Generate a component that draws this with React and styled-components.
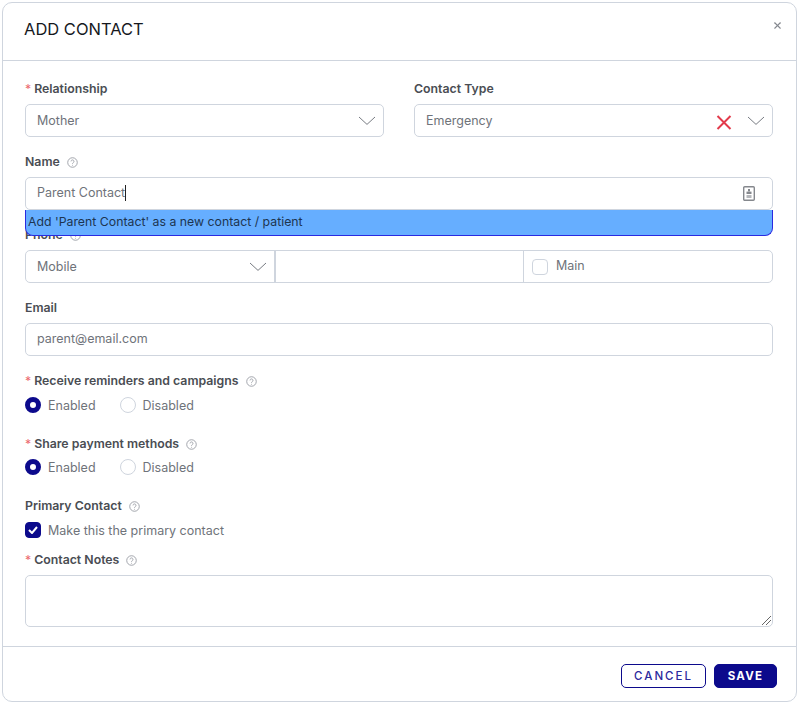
import React from 'react';
import styled, { createGlobalStyle } from "styled-components"
import { X } from "lucide-react"

const Global = createGlobalStyle`
  html, body { margin: 0; padding: 0; background: #fff; }
  * { box-sizing: border-box; }
  body { font-family: Inter, "Liberation Sans", sans-serif; }
`
const Modal = styled.div`
  position: relative;
  width: 795px;
  height: 700px;
  margin: 2px 0 0 2px;
  background: #fff;
  border: 1px solid #cfd5de;
  border-radius: 10px;
  display: flex;
  flex-direction: column;
`
const Header = styled.div`
  height: 58px;
  flex: none;
  display: flex;
  align-items: center;
  padding: 0 21px;
  border-bottom: 1px solid #cfd5de;
`
const Title = styled.h1`
  margin: 0 0 5px;
  font-size: 16.5px;
  font-weight: 400;
  color: #16181d;
`
const Close = styled.span`
  position: absolute;
  top: 17px;
  right: 13px;
  color: #85898f;
  display: flex;
`
const Body = styled.div`
  flex: 1;
  padding: 19px 23px 0 22px;
  display: flex;
  flex-direction: column;
`
const Row = styled.div`
  display: grid;
  grid-template-columns: 359px 359px;
  column-gap: 30px;
`
const Field = styled.div`
  position: relative;
  margin-bottom: ${p => p.$mb ?? 16}px;
`
const Label = styled.div`
  height: 24px;
  padding-top: 1px;
  display: flex;
  align-items: flex-start;
  font-size: 12.3px;
  line-height: 16px;
  font-weight: 600;
  color: #4a4d53;
`
const Star = styled.span`
  color: #ec6a6e;
  font-weight: 400;
  margin-right: 3px;
`
const Help = styled.svg`
  width: 11px;
  height: 11px;
  margin: 3px 0 0 7px;
  fill: none;
  stroke: #9a9ea5;
  stroke-width: 1;
`
const Box = styled.div`
  height: 33px;
  display: flex;
  align-items: center;
  padding: 0 7px ${p => p.$pb ?? 0}px 11px;
  background: #fff;
  border: 1px solid #cfd5de;
  border-radius: 5px;
  font-size: 12.5px;
  color: #6f737a;
`
const Value = styled.span`
  flex: 1;
`
const Caret = styled.span`
  width: 1px;
  height: 16px;
  background: #222;
`
const ValueWrap = styled.span`
  flex: 1;
  display: flex;
  align-items: center;
  margin-top: -2px;
`
const ChevronSvg = styled.svg`
  width: 18px;
  height: 9px;
  flex: none;
  fill: none;
  stroke: #777b82;
  stroke-width: 1;
`
const ClearSvg = styled.svg`
  width: 16px;
  height: 15px;
  flex: none;
  margin: 3px 15px 0 0;
  fill: none;
  stroke: #e23a4b;
  stroke-width: 2;
`
const CardSvg = styled.svg`
  width: 14px;
  height: 17px;
  flex: none;
  margin-right: 9px;
`
const Suggestion = styled.div`
  position: absolute;
  left: 0;
  right: 0;
  top: 57px;
  height: 26px;
  display: flex;
  align-items: center;
  padding: 0 0 3px 2px;
  background: #66aeff;
  border: 1px solid #2a2ae0;
  border-top: none;
  border-radius: 0 0 8px 8px;
  font-size: 12.3px;
  color: #1d3550;
  z-index: 2;
`
const PhoneRow = styled.div`
  height: 33px;
  display: grid;
  grid-template-columns: 250px 248px 1fr;
  border: 1px solid #cfd5de;
  border-radius: 5px;
  font-size: 12.5px;
  color: #6f737a;
`
const PhoneCell = styled.div`
  display: flex;
  align-items: center;
  padding: 0 ${p => p.$pr ?? 7}px 0 ${p => p.$pl ?? 11}px;
  border-right: ${p => p.$line ?? 0}px solid #cfd5de;
`
const MainText = styled.span`
  margin-top: -2px;
`
const Square = styled.span`
  width: 16px;
  height: 16px;
  flex: none;
  margin-right: ${p => p.$on ? 7 : 8}px;
  display: flex;
  align-items: center;
  justify-content: center;
  border: 1px solid ${p => p.$on ? "#0c0a8c" : "#cfd5de"};
  border-radius: 4px;
  background: ${p => p.$on ? "#0c0a8c" : "#fff"};
`
const Options = styled.div`
  height: ${p => p.$h ?? 16}px;
  display: flex;
  align-items: center;
  font-size: 12.5px;
  color: #6f737a;
`
const Radio = styled.span`
  width: 16px;
  height: 16px;
  margin-right: 7px;
  flex: none;
  border-radius: 50%;
  border: ${p => p.$on ? "5px solid #0c0a8c" : "1px solid #cfd5de"};
  background: #fff;
`
const Option = styled.label`
  display: flex;
  align-items: center;
  margin-right: 24px;
`
const Notes = styled.div`
  position: relative;
  height: 52px;
  border: 1px solid #cfd5de;
  border-radius: 5px;
`
const Grip = styled.svg`
  position: absolute;
  right: 1px;
  bottom: 1px;
  width: 9px;
  height: 9px;
  stroke: #666;
  stroke-width: 1;
`
const Footer = styled.div`
  height: 55px;
  flex: none;
  display: flex;
  align-items: flex-start;
  justify-content: flex-end;
  gap: 8px;
  padding: 17px 19px 0 0;
  border-top: 1px solid #cfd5de;
`
const Button = styled.button`
  width: ${p => p.$w}px;
  height: 24px;
  padding: 0;
  border: 1px solid #0c0a8c;
  border-radius: 5px;
  background: ${p => p.$primary ? "#0c0a8c" : "#fff"};
  color: ${p => p.$primary ? "#fff" : "#2b2a9c"};
  font-family: inherit;
  font-size: 11.5px;
  font-weight: ${p => p.$primary ? 700 : 500};
  letter-spacing: ${p => p.$primary ? 1.2 : 2}px;
`

const HelpIcon = () => (
  <Help viewBox="0 0 12 12">
    <circle cx="6" cy="6" r="5.2" />
    <path d="M4.4 4.8a1.6 1.6 0 1 1 2.4 1.4c-.5.3-.8.6-.8 1.2M6 8.6v.8" />
  </Help>
)

const Chevron = () => (
  <ChevronSvg viewBox="0 0 18 9">
    <path d="M1 1l8 7.4L17 1" />
  </ChevronSvg>
)

const ClearIcon = () => (
  <ClearSvg viewBox="0 0 16 15">
    <path d="M1.5 1l13 13M14.5 1l-13 13" />
  </ClearSvg>
)

const ContactCard = () => (
  <CardSvg viewBox="0 0 14 17">
    <rect x="1.7" y="1.7" width="10.6" height="13.6" rx="1" fill="#fff" stroke="#85888d" strokeWidth="1.4" />
    <rect x="6" y="4" width="2" height="2.4" fill="#85888d" />
    <rect x="4.5" y="6.6" width="5" height="2.4" fill="#85888d" />
    <rect x="4.5" y="10" width="5" height="3" fill="#b5b7bb" />
  </CardSvg>
)

const App = () => {
  return (
    <Modal>
      <Global />
      <Header>
        <Title>ADD CONTACT</Title>
      </Header>
      <Close><X size={11} strokeWidth={2.4} /></Close>
      <Body>
        <Row>
          <Field>
            <Label><Star>*</Star>Relationship</Label>
            <Box><Value>Mother</Value><Chevron /></Box>
          </Field>
          <Field>
            <Label>Contact Type</Label>
            <Box><Value>Emergency</Value><ClearIcon /><Chevron /></Box>
          </Field>
        </Row>
        <Field>
          <Label>Name<HelpIcon /></Label>
          <Box>
            <ValueWrap>Parent Contact<Caret /></ValueWrap>
            <ContactCard />
          </Box>
          <Suggestion>Add 'Parent Contact' as a new contact / patient</Suggestion>
        </Field>
        <Field>
          <Label>Phone<HelpIcon /></Label>
          <PhoneRow>
            <PhoneCell $line={2}><Value>Mobile</Value><Chevron /></PhoneCell>
            <PhoneCell $line={1} />
            <PhoneCell $pl={8}><Square /><MainText>Main</MainText></PhoneCell>
          </PhoneRow>
        </Field>
        <Field>
          <Label>Email</Label>
          <Box $pb={2}>parent@email.com</Box>
        </Field>
        <Field $mb={21}>
          <Label><Star>*</Star>Receive reminders and campaigns<HelpIcon /></Label>
          <Options $h={18}>
            <Option><Radio $on />Enabled</Option>
            <Option><Radio />Disabled</Option>
          </Options>
        </Field>
        <Field $mb={22}>
          <Label><Star>*</Star>Share payment methods<HelpIcon /></Label>
          <Options>
            <Option><Radio $on />Enabled</Option>
            <Option><Radio />Disabled</Option>
          </Options>
        </Field>
        <Field $mb={12}>
          <Label>Primary Contact<HelpIcon /></Label>
          <Options $h={18}>
            <Square $on>
              <svg width="10" height="8" viewBox="0 0 10 8">
                <path d="M1 4l3 3 5-6" fill="none" stroke="#fff" strokeWidth="2" />
              </svg>
            </Square>
            Make this the primary contact
          </Options>
        </Field>
        <Field>
          <Label><Star>*</Star>Contact Notes<HelpIcon /></Label>
          <Notes>
            <Grip viewBox="0 0 9 9">
              <path d="M0 9L9 0M4 9l5-5" />
            </Grip>
          </Notes>
        </Field>
      </Body>
      <Footer>
        <Button $w={85}>CANCEL</Button>
        <Button $w={63} $primary>SAVE</Button>
      </Footer>
    </Modal>
  )
}

export default App
